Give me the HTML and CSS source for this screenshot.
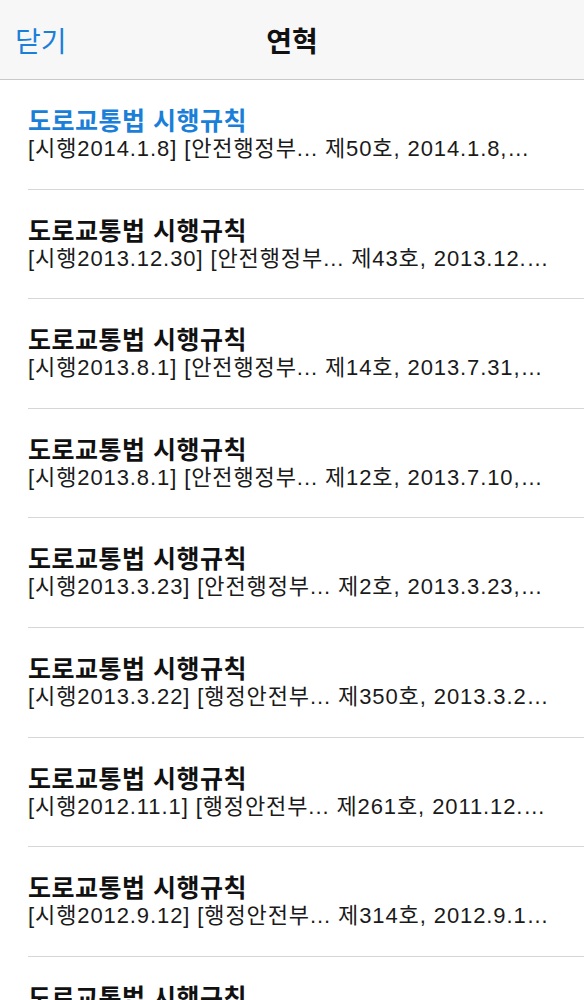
FILE: index.html
```html
<!DOCTYPE html>
<html lang="ko">
<head>
  <meta charset="UTF-8" />
  <meta name="viewport" content="width=device-width, initial-scale=1" />
  <title>연혁</title>
  <link rel="stylesheet" href="styles.css">
</head>
<body>
  <div class="nav-bar">
    <a class="nav-close" href="#">닫기</a>
    <h1 class="nav-title">연혁</h1>
  </div>

  <ul class="history-list">
    <li class="history-item active">
      <div class="item-title">도로교통법 시행규칙</div>
      <div class="item-desc">[시행2014.1.8] [안전행정부... 제50호, 2014.1.8,…</div>
    </li>
    <li class="history-item">
      <div class="item-title">도로교통법 시행규칙</div>
      <div class="item-desc">[시행2013.12.30] [안전행정부... 제43호, 2013.12.…</div>
    </li>
    <li class="history-item">
      <div class="item-title">도로교통법 시행규칙</div>
      <div class="item-desc">[시행2013.8.1] [안전행정부... 제14호, 2013.7.31,…</div>
    </li>
    <li class="history-item">
      <div class="item-title">도로교통법 시행규칙</div>
      <div class="item-desc">[시행2013.8.1] [안전행정부... 제12호, 2013.7.10,…</div>
    </li>
    <li class="history-item">
      <div class="item-title">도로교통법 시행규칙</div>
      <div class="item-desc">[시행2013.3.23] [안전행정부... 제2호, 2013.3.23,…</div>
    </li>
    <li class="history-item">
      <div class="item-title">도로교통법 시행규칙</div>
      <div class="item-desc">[시행2013.3.22] [행정안전부... 제350호, 2013.3.2…</div>
    </li>
    <li class="history-item">
      <div class="item-title">도로교통법 시행규칙</div>
      <div class="item-desc">[시행2012.11.1] [행정안전부... 제261호, 2011.12.…</div>
    </li>
    <li class="history-item">
      <div class="item-title">도로교통법 시행규칙</div>
      <div class="item-desc">[시행2012.9.12] [행정안전부... 제314호, 2012.9.1…</div>
    </li>
    <li class="history-item">
      <div class="item-title">도로교통법 시행규칙</div>
      <div class="item-desc">[시행2012.7.1] [행정안전부... 제250호, 2012.6.29,…</div>
    </li>
  </ul>
</body>
</html>
```

FILE: styles.css
```css
body {
  margin: 0;
  font-family: "Liberation Sans", "Noto Sans CJK KR", sans-serif;
  background-color: #fff;
  color: #111;
  overflow: hidden;
}

.nav-bar {
  height: 79px;
  background-color: #f7f7f8;
  border-bottom: 1px solid #c9c9cc;
  display: flex;
  align-items: center;
  justify-content: center;
  position: relative;
}

.nav-close {
  position: absolute;
  left: 15px;
  top: 0;
  height: 79px;
  display: flex;
  align-items: center;
  color: #1b7fd8;
  font-size: 28px;
  text-decoration: none;
}

.nav-title {
  margin: 0;
  font-size: 28px;
  font-weight: bold;
  color: #111;
}

.history-list {
  list-style: none;
  margin: 0;
  padding: 0 0 0 28px;
}

.history-item {
  padding: 26px 30px 26.6px 0;
  border-bottom: 1px solid #d6d6d9;
}

.item-title {
  font-size: 25px;
  line-height: 30px;
  letter-spacing: 0.5px;
  font-weight: bold;
  color: #111;
  white-space: nowrap;
}

.history-item.active .item-title {
  color: #1b7fd8;
}

.item-desc {
  font-size: 22px;
  line-height: 26px;
  letter-spacing: 0.9px;
  color: #1a1a1a;
  white-space: nowrap;
  overflow: hidden;
  text-overflow: ellipsis;
}
```
